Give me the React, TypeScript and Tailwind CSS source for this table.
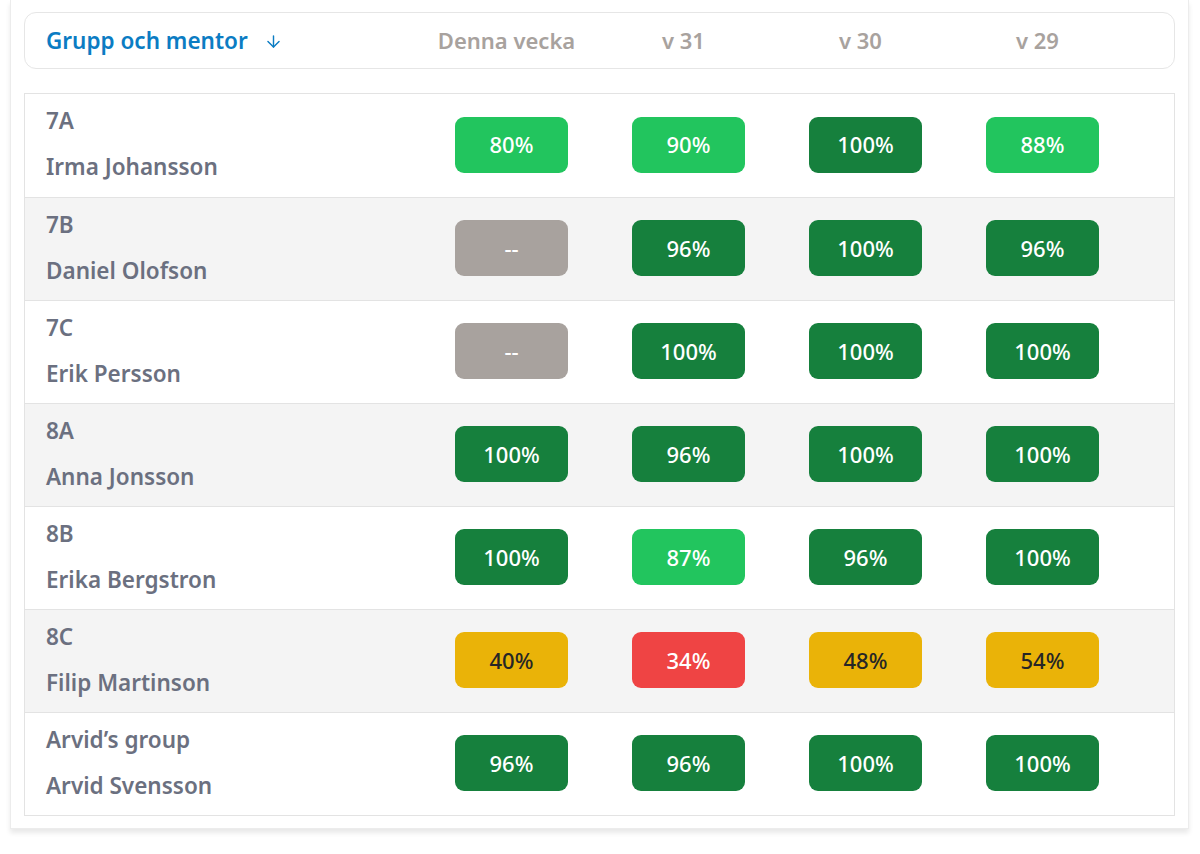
import { ArrowDown } from "lucide-react";

type Tone = "light" | "dark" | "none" | "warn" | "bad";

const ROWS: { group: string; mentor: string; cells: [string, Tone][] }[] = [
  { group: "7A", mentor: "Irma Johansson", cells: [["80%", "light"], ["90%", "light"], ["100%", "dark"], ["88%", "light"]] },
  { group: "7B", mentor: "Daniel Olofson", cells: [["--", "none"], ["96%", "dark"], ["100%", "dark"], ["96%", "dark"]] },
  { group: "7C", mentor: "Erik Persson", cells: [["--", "none"], ["100%", "dark"], ["100%", "dark"], ["100%", "dark"]] },
  { group: "8A", mentor: "Anna Jonsson", cells: [["100%", "dark"], ["96%", "dark"], ["100%", "dark"], ["100%", "dark"]] },
  { group: "8B", mentor: "Erika Bergstron", cells: [["100%", "dark"], ["87%", "light"], ["96%", "dark"], ["100%", "dark"]] },
  { group: "8C", mentor: "Filip Martinson", cells: [["40%", "warn"], ["34%", "bad"], ["48%", "warn"], ["54%", "warn"]] },
  { group: "Arvid’s group", mentor: "Arvid Svensson", cells: [["96%", "dark"], ["96%", "dark"], ["100%", "dark"], ["100%", "dark"]] },
];

const TONE_CLASS: Record<Tone, string> = {
  light: "bg-[#22c55e] text-white",
  dark: "bg-[#16803d] text-white",
  none: "bg-[#a8a29e] text-white",
  warn: "bg-[#eab308] text-[#262626]",
  bad: "bg-[#ef4444] text-white",
};

const WEEKS = ["Denna vecka", "v 31", "v 30", "v 29"];

function Badge({ value, tone }: { value: string; tone: Tone }) {
  return (
    <div className="flex justify-center">
      <div
        className={`w-[113px] h-[56px] -mt-[2px] rounded-[9px] flex items-center justify-center text-[22px] font-medium ${TONE_CLASS[tone]}`}
      >
        {value}
      </div>
    </div>
  );
}

export default function App() {
  return (
    <div
      className="min-h-screen bg-white"
      style={{ fontFamily: '"Noto Sans", "Open Sans", sans-serif' }}
    >
      <div className="ml-[10px] w-[1179px] bg-white border border-t-0 border-[#ececec] shadow-[0_4px_5px_rgba(0,0,0,0.09)] px-[13px] pt-[12px] pb-[12px]">
        <header className="h-[57px] rounded-[12px] border border-[#e6e6e6] bg-white grid grid-cols-[1fr_177px_177px_177px_177px] items-center pl-[21px] pr-[48px]">
          <div className="flex items-center gap-[16px] text-[#0b7cc3] text-[22.5px] font-semibold">
            <span>Grupp och mentor</span>
            <ArrowDown size={19} strokeWidth={1.8} className="mt-[1px]" />
          </div>
          {WEEKS.map((w) => (
            <div key={w} className="text-center text-[22px] font-semibold text-[#a8a29e]">
              {w}
            </div>
          ))}
        </header>

        <div className="mt-[24px] border border-[#e3e3e3]">
          {ROWS.map((row, i) => (
            <div
              key={row.group}
              className={`h-[103px] grid grid-cols-[1fr_177px_177px_177px_177px] items-center pl-[21px] pr-[43px] ${
                i > 0 ? "border-t border-[#e3e3e3]" : ""
              } ${i % 2 === 1 ? "bg-[#f4f4f4]" : "bg-white"}`}
            >
              <div className="flex flex-col gap-[14px] text-[22.5px] font-semibold text-[#6b7080] leading-[32px] -mt-[3px]">
                <span>{row.group}</span>
                <span>{row.mentor}</span>
              </div>
              {row.cells.map(([v, t], j) => (
                <Badge key={j} value={v} tone={t} />
              ))}
            </div>
          ))}
        </div>
      </div>
    </div>
  );
}
